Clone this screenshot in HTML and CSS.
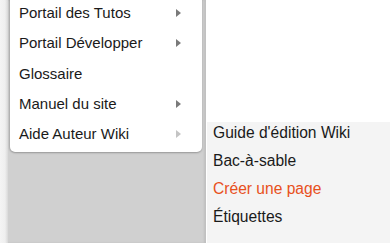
FILE: index.html
```html
<!DOCTYPE html>
<html lang="fr">
<head>
    <meta charset="UTF-8">
    <meta name="viewport" content="width=device-width, initial-scale=1.0">
    <title>Menu</title>
    <link rel="stylesheet" href="styles.css">
</head>
<body>
    <div class="page">
        <div class="rail"></div>
        <div class="drop">
            <ul class="menu">
                <li class="item">Portail des Tutos <span class="arrow"></span></li>
                <li class="item">Portail Développer <span class="arrow"></span></li>
                <li class="item">Glossaire</li>
                <li class="item">Manuel du site <span class="arrow"></span></li>
                <li class="item">Aide Auteur Wiki <span class="arrow faded"></span></li>
            </ul>
        </div>
        <div class="side">
            <ul class="submenu">
                <li class="sub-item">Guide d'édition Wiki</li>
                <li class="sub-item">Bac-à-sable</li>
                <li class="sub-item active">Créer une page</li>
                <li class="sub-item">Étiquettes</li>
            </ul>
        </div>
    </div>
</body>
</html>
```

FILE: styles.css
```css
*{
    box-sizing: border-box;
}
body{
    margin: 0;
    background: #fff;
    font-family: "Liberation Sans", Arial, sans-serif;
    font-size: 15px;
    color: #1a1a1a;
}
ul{
    list-style: none;
    margin: 0;
    padding: 0;
}
.page{
    display: flex;
    height: 243px;
    overflow: hidden;
}
.rail{
    width: 8px;
    background: linear-gradient(to right, #f4f4f4 0, #efefef 5px, #d8d8d8 8px);
}
.drop{
    width: 198px;
    background: #d0d0d0;
    padding: 0 4px 0 2px;
    box-shadow: inset -2px 0 2px rgba(0,0,0,.08);
}
.menu{
    background: #fff;
    margin-top: -2px;
    padding: 0 21px 3px 9px;
    border-radius: 0 0 5px 5px;
    box-shadow: 0 1px 2px rgba(0,0,0,.25), -1px 0 2px rgba(0,0,0,.12);
}
.item{
    height: 30.25px;
    line-height: 30px;
    display: flex;
    justify-content: space-between;
    align-items: center;
}
.arrow{
    width: 0;
    height: 0;
    border-top: 4.5px solid transparent;
    border-bottom: 4.5px solid transparent;
    border-left: 5px solid #7a7a7a;
}
.arrow.faded{
    border-left-color: #c4c4c4;
}
.side{
    flex: 1;
    padding-top: 122px;
}
.submenu{
    margin-left: 1px;
    height: 100%;
    background: #f4f4f4;
    padding: 1px 0 0 6px;
    font-size: 15.6px;
}
.sub-item{
    line-height: 20px;
    padding-bottom: 8.1px;
    color: #1a1a1a;
}
.sub-item.active{
    color: #e8501c;
}
```
